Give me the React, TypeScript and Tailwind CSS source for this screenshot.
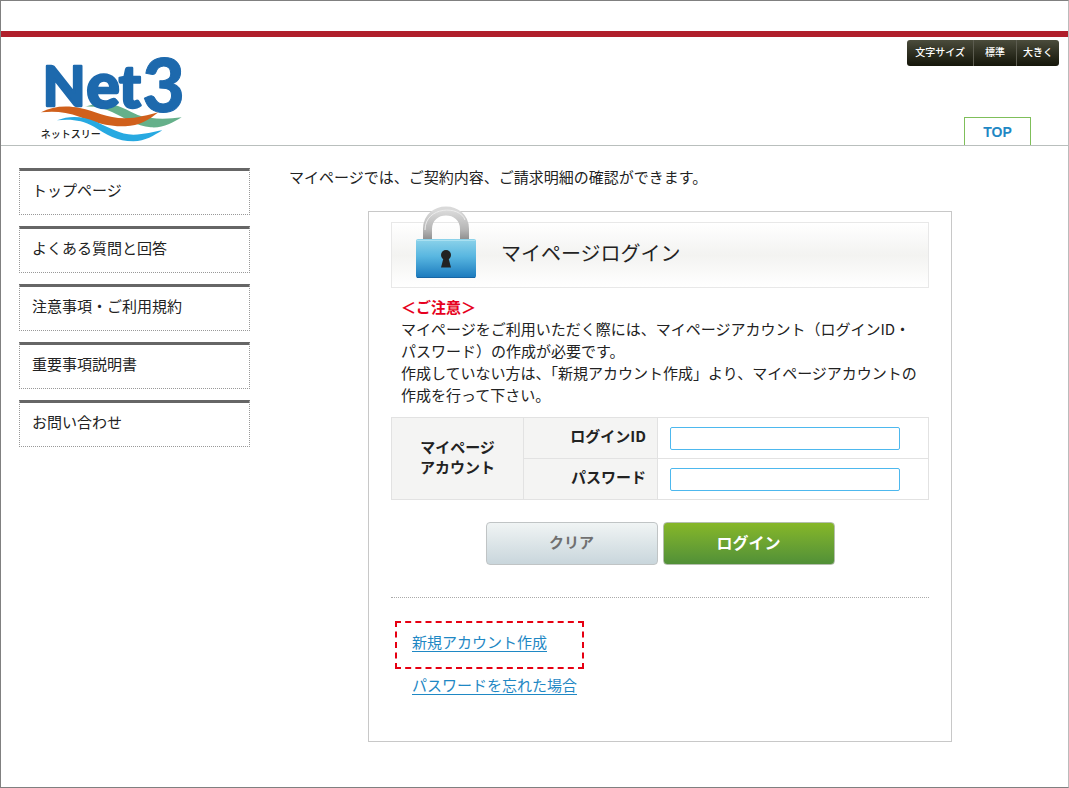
import React from 'react'

const menus = [
  'トップページ',
  'よくある質問と回答',
  '注意事項・ご利用規約',
  '重要事項説明書',
  'お問い合わせ',
]

const Logo = () => {
  return (
    <svg
      className="w-[150px] h-[90px] overflow-visible"
      viewBox="0 0 450 270"
      role="img"
      aria-label="Net3 ネットスリー"
    >
      <path
        fill="#65b08a"
        d="M141 155C170 145 205 142 240 153C276 166 300 187 336 188C370 194 402 190 431 187C402 204 376 220 338 217C296 213 258 188 222 171C195 158 168 154 141 155Z"
      />
      <path
        fill="#d0601c"
        d="M9 172C42 154 84 150 126 159C170 168 206 189 260 190C300 190 332 179 361 172C332 195 304 213 262 214C208 215 168 202 126 186C84 170 48 168 9 172Z"
      />
      <path
        fill="#27a9e1"
        d="M57 196C96 180 136 184 174 200C214 217 246 238 286 239C320 239 346 230 373 226C348 241 322 259 286 259C238 259 204 238 168 215C132 195 98 191 57 196Z"
      />
      <g
        fill="#1d69ad"
        stroke="#1d69ad"
        strokeLinejoin="round"
        fontFamily="Lato"
        fontWeight="900"
      >
        <text y="154" fontSize="166" strokeWidth="7">
          <tspan x="14">N</tspan>
          <tspan x="145" y="158" fontSize="188">
            e
          </tspan>
          <tspan x="242" y="158" fontSize="176">
            t
          </tspan>
        </text>
        <text x="313" y="172" fontSize="220" strokeWidth="3">
          3
        </text>
      </g>
      <text
        x="8"
        y="250"
        fill="#222"
        fontFamily="Noto Sans CJK JP"
        fontWeight="500"
        fontSize="30"
      >
        ネットスリー
      </text>
    </svg>
  )
}

const Lock = () => {
  return (
    <svg className="w-[62px] h-[74px]" viewBox="0 0 62 74" aria-hidden="true">
      <defs>
        <linearGradient id="shackle" x1="0" x2="0" y1="0" y2="1">
          <stop offset="0" stopColor="#d9d9d9" />
          <stop offset="0.6" stopColor="#b5b5b5" />
          <stop offset="1" stopColor="#858585" />
        </linearGradient>
        <linearGradient id="body" x1="0" x2="0" y1="0" y2="1">
          <stop offset="0" stopColor="#8dd3ea" />
          <stop offset="0.45" stopColor="#58b6e0" />
          <stop offset="1" stopColor="#1a79bd" />
        </linearGradient>
      </defs>
      <path
        d="M12.500 37V24C12.500 0 49.500 0 49.500 24V37"
        fill="none"
        stroke="url(#shackle)"
        strokeWidth="9"
      />
      <path
        d="M10 25C10 1 45 0 50 15"
        fill="none"
        stroke="#ececec"
        strokeWidth="1"
      />
      <rect x="1" y="34" width="60" height="39" rx="2" fill="url(#body)" />
      <path d="M2 35.500H60" stroke="#a9e0f1" strokeWidth="1" />
      <path d="M2 72.500H60" stroke="#1766a5" strokeWidth="1" />
      <circle cx="31" cy="50" r="5" fill="#222" />
      <path d="M28.500 53H33.500L36 62.500H26Z" fill="#222" />
    </svg>
  )
}

const App = () => {
  return (
    <div className="flex min-h-screen flex-col border border-[#808080] border-r-[#bbbbbb] bg-white font-['Liberation_Sans','Noto_Sans_CJK_JP',sans-serif] text-[15px] leading-[22px] text-[#222222]">
      <div className="h-9 border-b-6 border-[#b01f2b]"></div>
      <header className="flex justify-between border-b border-[#b9bfbd] pl-[37px]">
        <a href="#" className="mt-[18px]">
          <Logo />
        </a>
        <div className="flex flex-col items-end justify-between pt-[3px] pr-[9px]">
          <div className="flex h-[26px] divide-x divide-[#5c5c50] overflow-hidden rounded-[3px] bg-linear-to-b from-[#4b4c3c] to-[#15160a] text-[10px] font-medium text-white">
            <span className="flex items-center px-2">文字サイズ</span>
            <button className="px-[11px]">標準</button>
            <button className="px-[6px]">大きく</button>
          </div>
          <a
            href="#"
            className="mr-7 flex h-7 w-[67px] items-center justify-center border border-b-0 border-[#7fbf5a] text-sm font-bold text-[#1f88c4]"
          >
            TOP
          </a>
        </div>
      </header>

      <div className="flex flex-1 pt-5 pl-[18px] font-['Noto_Sans_CJK_JP',sans-serif]">
        <nav className="mt-[2px] w-[231px] shrink-0">
          <ul className="space-y-[11px]">
            {menus.map((menu) => (
              <li key={menu}>
                <a
                  href="#"
                  className="block h-[47px] border border-t-3 border-dotted border-[#999999] [border-top-style:solid] border-t-[#666666] px-3 pt-2"
                >
                  {menu}
                </a>
              </li>
            ))}
          </ul>
        </nav>

        <main className="flex-1 pr-[37px] pb-[45px] pl-[39px]">
          <p>マイページでは、ご契約内容、ご請求明細の確認ができます。</p>

          <section className="mx-auto mt-[23px] w-full max-w-[584px] border border-[#c8c8c8] px-[22px] pt-[10px] pb-[45px]">
            <div className="relative flex h-[66px] items-center border border-[#e8e8e8] bg-linear-to-b from-white via-[#f3f3f1] to-white pb-1 pl-[109px]">
              <div className="absolute bottom-2 left-[23px]">
                <Lock />
              </div>
              <h1 className="text-xl">マイページログイン</h1>
            </div>

            <div className="mt-2 mb-[11px] pl-[10px]">
              <p className="font-bold text-[#e60020]">＜ご注意＞</p>
              <p>
                マイページをご利用いただく際には、マイページアカウント（ログインID・
                <br />
                パスワード）の作成が必要です。
                <br />
                作成していない方は、「新規アカウント作成」より、マイページアカウントの
                <br />
                作成を行って下さい。
              </p>
            </div>

            <form>
              <table className="w-full table-fixed border-collapse">
                <colgroup>
                  <col className="w-[132px]" />
                  <col className="w-[134px]" />
                  <col />
                </colgroup>
                <tbody>
                  <tr className="h-[41px]">
                    <th
                      rowSpan={2}
                      className="border border-[#e2e2e2] bg-[#f4f4f3] pb-1 leading-5"
                    >
                      マイページ
                      <br />
                      アカウント
                    </th>
                    <th className="border border-[#e2e2e2] bg-[#f4f4f3] pr-[11px] pb-1 text-right">
                      <label htmlFor="login-id">ログインID</label>
                    </th>
                    <td className="border border-[#e2e2e2] pl-3">
                      <input
                        id="login-id"
                        type="text"
                        className="block h-[23px] w-[230px] rounded-xs border border-[#4db8ee] px-1"
                      />
                    </td>
                  </tr>
                  <tr className="h-[41px]">
                    <th className="border border-[#e2e2e2] bg-[#f4f4f3] pr-[11px] pb-1 text-right">
                      <label htmlFor="password">パスワード</label>
                    </th>
                    <td className="border border-[#e2e2e2] pl-3">
                      <input
                        id="password"
                        type="password"
                        className="block h-[23px] w-[230px] rounded-xs border border-[#4db8ee] px-1"
                      />
                    </td>
                  </tr>
                </tbody>
              </table>

              <div className="mt-[22px] flex justify-center gap-[5px]">
                <button
                  type="reset"
                  className="h-[43px] w-[172px] rounded border border-[#c0c4c5] bg-linear-to-b from-[#f0f4f4] to-[#c9d6dc] pb-1 font-bold text-[#707070]"
                >
                  クリア
                </button>
                <button
                  type="button"
                  className="h-[43px] w-[172px] rounded border border-[#b5bfae] bg-linear-to-b from-[#86b727] to-[#519037] pb-1 text-base font-bold text-white"
                >
                  ログイン
                </button>
              </div>
            </form>

            <div className="mt-8 border-t border-dotted border-[#aaaaaa] pt-[23px] pl-1 text-[#1f88c4]">
              <div className="flex h-12 w-[189px] items-center border-2 border-dashed border-[#e60012] pb-[6px] pl-[15px]">
                <a href="#" className="underline underline-offset-3">
                  新規アカウント作成
                </a>
              </div>
              <a
                href="#"
                className="mt-[5px] ml-[17px] inline-block underline underline-offset-3"
              >
                パスワードを忘れた場合
              </a>
            </div>
          </section>
        </main>
      </div>
    </div>
  )
}

export default App
